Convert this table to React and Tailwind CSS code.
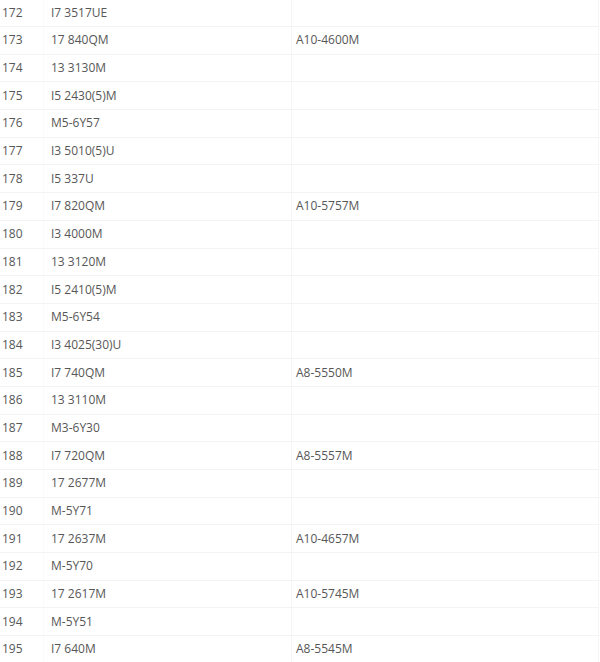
const rows = [
  ["172", "I7 3517UE", ""],
  ["173", "17 840QM", "A10-4600M"],
  ["174", "13 3130M", ""],
  ["175", "I5 2430(5)M", ""],
  ["176", "M5-6Y57", ""],
  ["177", "I3 5010(5)U", ""],
  ["178", "I5 337U", ""],
  ["179", "I7 820QM", "A10-5757M"],
  ["180", "I3 4000M", ""],
  ["181", "13 3120M", ""],
  ["182", "I5 2410(5)M", ""],
  ["183", "M5-6Y54", ""],
  ["184", "I3 4025(30)U", ""],
  ["185", "I7 740QM", "A8-5550M"],
  ["186", "13 3110M", ""],
  ["187", "M3-6Y30", ""],
  ["188", "I7 720QM", "A8-5557M"],
  ["189", "17 2677M", ""],
  ["190", "M-5Y71", ""],
  ["191", "17 2637M", "A10-4657M"],
  ["192", "M-5Y70", ""],
  ["193", "17 2617M", "A10-5745M"],
  ["194", "M-5Y51", ""],
  ["195", "I7 640M", "A8-5545M"],
];

export default function App() {
  return (
    <div className="w-[600px] h-[662px] overflow-hidden bg-white">
      <div
        className="-mt-[0.7px] w-[599px] text-[12px] text-[#575757]"
        style={{ fontFamily: '"Open Sans", "Noto Sans", sans-serif' }}
      >
        {rows.map((r) => (
          <div
            key={r[0]}
            className="grid grid-cols-[44px_248px_307px] h-[27.7px] border-b border-[#f3f3f3]"
          >
            <div className="flex items-center pl-[2px] border-r border-[#fafafa]">{r[0]}</div>
            <div className="flex items-center pl-[7px] border-r border-[#f6f6f6]">{r[1]}</div>
            <div className="flex items-center pl-[4px] border-r border-[#f6f6f6]">{r[2]}</div>
          </div>
        ))}
      </div>
    </div>
  );
}
